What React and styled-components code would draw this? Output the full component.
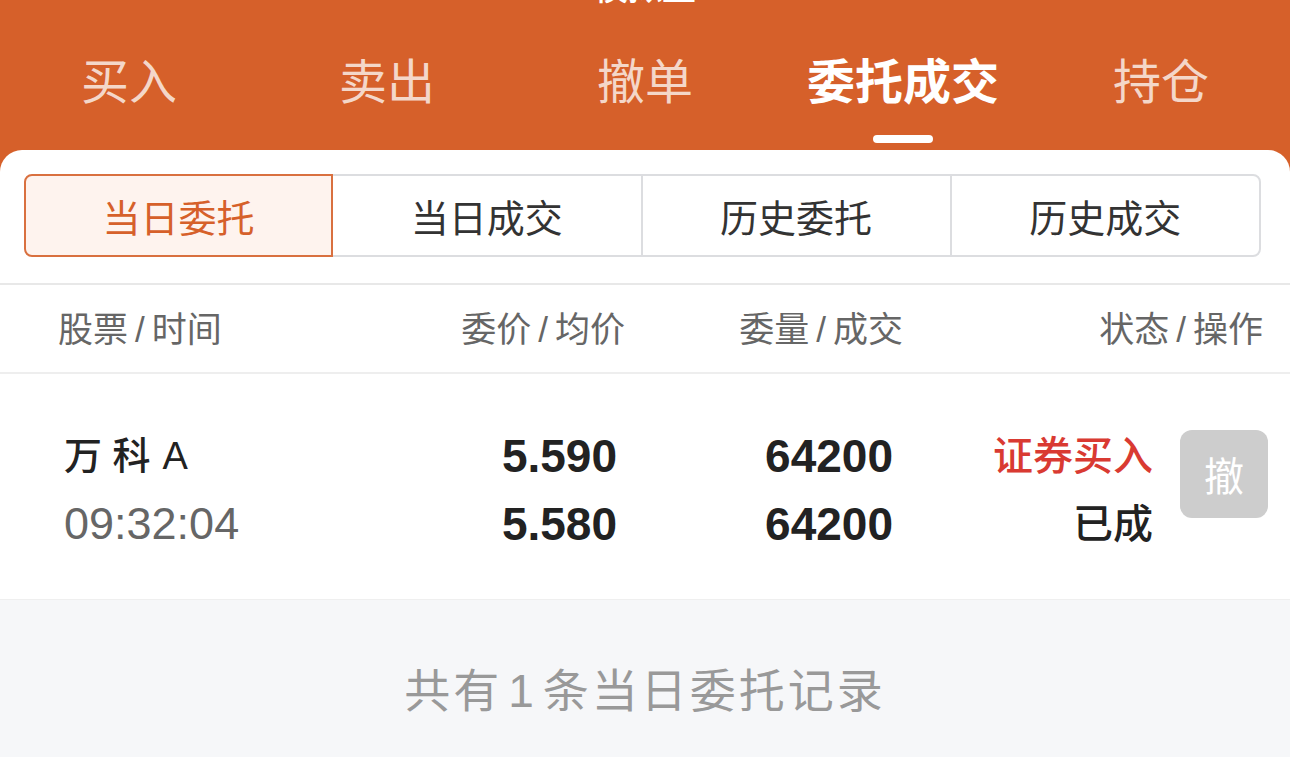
import React from 'react';
import styled, { createGlobalStyle } from 'styled-components';

const GlobalStyle = createGlobalStyle`
    html, body {
        margin: 0;
        padding: 0;
        background: #f6f7f9;
    }
    body {
        font-family: "Liberation Sans", "Noto Sans CJK SC", sans-serif;
        overflow: hidden;
    }
`;

const Screen = styled.div`
    width: 1290px;
    height: 757px;
    overflow: hidden;
    background: #f6f7f9;
`;

const Header = styled.div`
    background: #d6602a;
`;

// the page is scrolled a little, so only the foot of the title shows
const Title = styled.div`
    height: 44px;
    margin-top: -34px;
    line-height: 44px;
    text-align: center;
    font-size: 34px;
    font-weight: 500;
    color: #fff;
`;

const Tabs = styled.div`
    display: grid;
    grid-template-columns: repeat(5, 1fr);
    padding: 43px 0 7px;
`;

const Tab = styled.div`
    display: flex;
    flex-direction: column;
    align-items: center;
    font-size: 48px;
    line-height: 60px;
    font-weight: ${(p) => (p.active ? 700 : 400)};
    color: ${(p) => (p.active ? '#ffffff' : 'rgba(255, 255, 255, 0.76)')};

    &::after {
        content: '';
        width: 60px;
        height: 8px;
        margin-top: 22px;
        border-radius: 4px;
        background: ${(p) => (p.active ? '#ffffff' : 'transparent')};
    }
`;

const Panel = styled.div`
    background: #fff;
    border-radius: 22px 22px 0 0;
`;

const Segments = styled.div`
    display: grid;
    grid-template-columns: repeat(4, 1fr);
    margin: 0 29px 0 24px;
    padding: 24px 0 26px;
`;

const Segment = styled.div`
    height: 83px;
    box-sizing: border-box;
    display: flex;
    align-items: center;
    justify-content: center;
    font-size: 38px;
    color: ${(p) => (p.active ? '#d6602a' : '#333')};
    background: ${(p) => (p.active ? '#fef3ee' : '#fff')};
    border: 2px solid ${(p) => (p.active ? '#d9703f' : '#dcdde0')};
    margin-left: ${(p) => (p.first ? 0 : '-2px')};
    position: relative;
    z-index: ${(p) => (p.active ? 1 : 0)};

    &:first-child {
        border-radius: 8px 0 0 8px;
    }
    &:last-child {
        border-radius: 0 8px 8px 0;
    }
`;

const HeadRow = styled.div`
    display: grid;
    grid-template-columns: 300px 267px 278px 1fr;
    align-items: center;
    height: 87px;
    padding: 0 27px 0 58px;
    border-top: 2px solid #e8e8e8;
    border-bottom: 2px solid #eeeeee;
    font-size: 35px;
    color: #666;
`;

const Cell = styled.div`
    margin-top: -4px;
    text-align: ${(p) => p.align || 'left'};
`;

const Slash = styled.span`
    margin: 0 7px;
`;

const Row = styled.div`
    display: flex;
    align-items: center;
    height: 225px;
    padding: 0 21px 0 64px;
    border-bottom: 1px solid #efefef;
`;

const Col = styled.div`
    width: ${(p) => p.w}px;
    display: flex;
    flex-direction: column;
    align-items: ${(p) => (p.right ? 'flex-end' : 'flex-start')};
    gap: 22px;
    margin-top: 6px;
`;

const Name = styled.div`
    font-size: 38px;
    line-height: 46px;
    font-weight: 500;
    color: #222;
`;

const Letter = styled.span`
    margin-left: 12px;
`;

const Time = styled.div`
    font-size: 45px;
    line-height: 46px;
    color: #666;
`;

const Num = styled.div`
    font-size: 46px;
    line-height: 46px;
    font-weight: 700;
    color: #222;
`;

const Status = styled.div`
    font-size: 40px;
    line-height: 46px;
    font-weight: 500;
    color: ${(p) => p.color || '#222'};
`;

const CancelButton = styled.div`
    width: 88px;
    height: 88px;
    margin-left: 27px;
    margin-top: -26px;
    border-radius: 12px;
    background: #cdcdcd;
    color: #fff;
    font-size: 40px;
    display: flex;
    align-items: center;
    justify-content: center;
`;

const Footer = styled.div`
    padding-top: 61px;
    text-align: center;
    font-size: 46px;
    line-height: 60px;
    color: #999;
    letter-spacing: 3px;
`;

const Count = styled.span`
    margin: 0 6px;
`;

const tabs = ['买入', '卖出', '撤单', '委托成交', '持仓'];
const segments = ['当日委托', '当日成交', '历史委托', '历史成交'];

const Label = ({ a, b }) => (
    <>
        {a}
        <Slash>/</Slash>
        {b}
    </>
);

const App = () => {
    return (
        <Screen>
            <GlobalStyle />
            <Header>
                <Title>模拟盘</Title>
                <Tabs>
                    {tabs.map((t) => (
                        <Tab key={t} active={t === '委托成交'}>
                            {t}
                        </Tab>
                    ))}
                </Tabs>
                <Panel>
                    <Segments>
                        {segments.map((s, i) => (
                            <Segment key={s} active={i === 0} first={i === 0}>
                                {s}
                            </Segment>
                        ))}
                    </Segments>
                    <HeadRow>
                        <Cell><Label a="股票" b="时间" /></Cell>
                        <Cell align="right"><Label a="委价" b="均价" /></Cell>
                        <Cell align="right"><Label a="委量" b="成交" /></Cell>
                        <Cell align="right"><Label a="状态" b="操作" /></Cell>
                    </HeadRow>
                    <Row>
                        <Col w={300}>
                            <Name>万 科<Letter>A</Letter></Name>
                            <Time>09:32:04</Time>
                        </Col>
                        <Col w={253} right>
                            <Num>5.590</Num>
                            <Num>5.580</Num>
                        </Col>
                        <Col w={276} right>
                            <Num>64200</Num>
                            <Num>64200</Num>
                        </Col>
                        <Col w={260} right>
                            <Status color="#d93a32">证券买入</Status>
                            <Status>已成</Status>
                        </Col>
                        <CancelButton>撤</CancelButton>
                    </Row>
                </Panel>
            </Header>
            <Footer>共有<Count>1</Count>条当日委托记录</Footer>
        </Screen>
    );
};

export default App;
